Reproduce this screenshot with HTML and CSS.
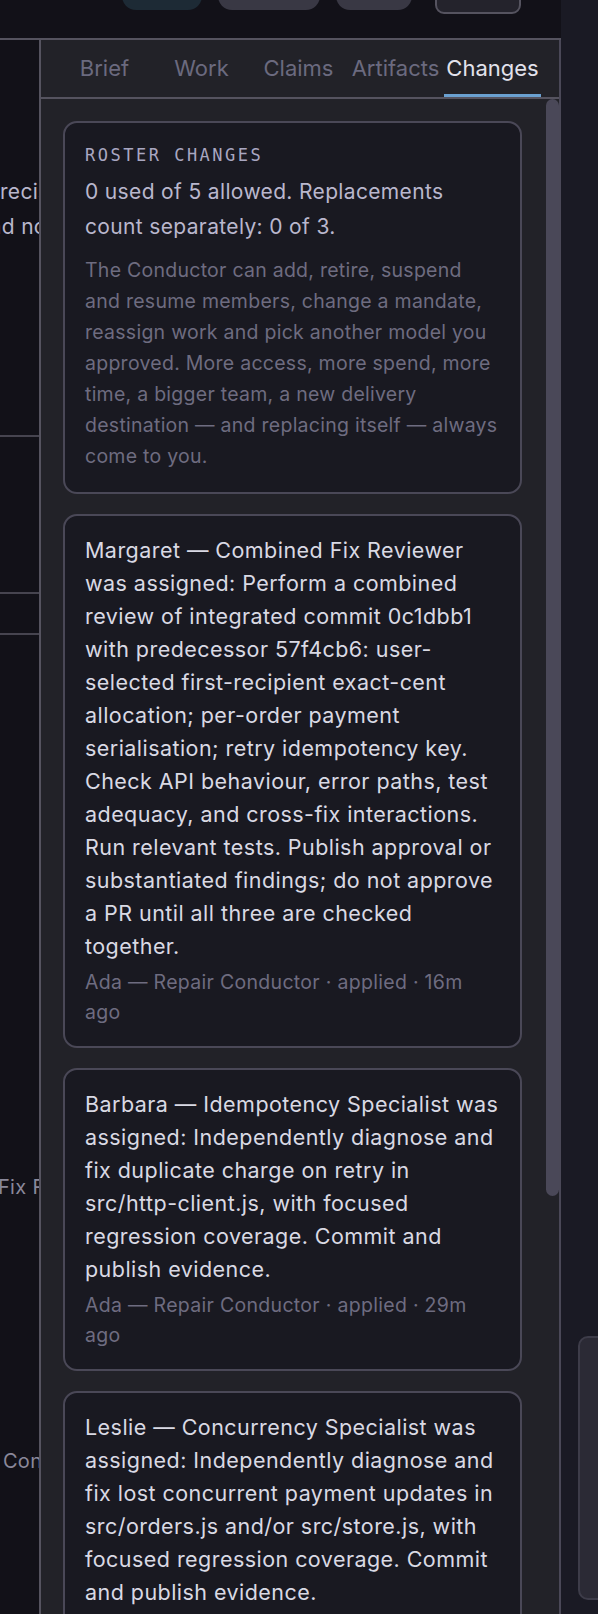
FILE: index.html
```html
<!DOCTYPE html>
<html lang="en">
<head>
<meta charset="utf-8">
<title>Changes</title>
<link rel="stylesheet" href="styles.css">
</head>
<body>
<div class="app">
  <div class="main">
    <header class="topbar">
      <span class="pill pill-teal"></span>
      <span class="pill pill-gray pill-b"></span>
      <span class="pill pill-gray pill-c"></span>
      <span class="pill pill-outline"></span>
    </header>
    <div class="body">
      <aside class="leftcol">
        <div class="lc-text lc-bright lc-first">recision of</div>
        <div class="lc-text lc-bright lc-indent">and no</div>
        <div class="lc-rule lc-rule-a"></div>
        <div class="lc-rule lc-rule-b"></div>
        <div class="lc-rule lc-rule-c"></div>
        <div class="lc-text lc-dim lc-fix">Fix Reviewer</div>
        <div class="lc-text lc-dim lc-com">&nbsp;Concurrency</div>
      </aside>
      <section class="panel">
        <nav class="tabs">
          <span class="tab">Brief</span>
          <span class="tab">Work</span>
          <span class="tab">Claims</span>
          <span class="tab">Artifacts</span>
          <span class="tab tab-active">Changes</span>
        </nav>
        <div class="scroll">
          <div class="content">
            <article class="card">
              <div class="label">ROSTER CHANGES</div>
              <p class="summary">0 used of 5 allowed. Replacements count separately: 0 of 3.</p>
              <p class="desc">The Conductor can add, retire, suspend and resume members, change a mandate, reassign work and pick another model you approved. More access, more spend, more time, a bigger team, a new delivery destination — and replacing itself — always come to you.</p>
            </article>
            <article class="card">
              <p class="entry">Margaret — Combined Fix Reviewer was assigned: Perform a combined review of integrated commit 0c1dbb1 with predecessor 57f4cb6: user-selected first-recipient exact-cent allocation; per-order payment serialisation; retry idempotency key. Check API behaviour, error paths, test adequacy, and cross-fix interactions. Run relevant tests. Publish approval or substantiated findings; do not approve a PR until all three are checked together.</p>
              <p class="meta">Ada — Repair Conductor · applied · 16m ago</p>
            </article>
            <article class="card">
              <p class="entry">Barbara — Idempotency Specialist was assigned: Independently diagnose and fix duplicate charge on retry in src/http-client.js, with focused regression coverage. Commit and publish evidence.</p>
              <p class="meta">Ada — Repair Conductor · applied · 29m ago</p>
            </article>
            <article class="card">
              <p class="entry">Leslie — Concurrency Specialist was assigned: Independently diagnose and fix lost concurrent payment updates in src/orders.js and/or src/store.js, with focused regression coverage. Commit and publish evidence.</p>
              <p class="meta">Ada — Repair Conductor · applied · 31m ago</p>
            </article>
          </div>
          <div class="track"><div class="thumb"></div></div>
        </div>
      </section>
    </div>
  </div>
  <aside class="strip">
    <div class="strip-box"></div>
  </aside>
</div>
</body>
</html>
```

FILE: styles.css
```css
html, body {
  margin: 0;
  padding: 0;
  height: 1614px;
  overflow: hidden;
  background: #1a1a24;
  font-family: Inter, "Noto Sans", "DejaVu Sans", sans-serif;
}

.app {
  display: flex;
  width: 598px;
  height: 1614px;
  overflow: hidden;
}

.main {
  width: 561px;
  flex: none;
  display: flex;
  flex-direction: column;
  height: 1614px;
}

/* top bar */
.topbar {
  height: 38px;
  flex: none;
  background: #121118;
  border-bottom: 2px solid #55535f;
  display: flex;
  align-items: flex-start;
  padding-left: 122px;
  overflow: hidden;
}

.pill {
  display: block;
  height: 40px;
  margin-top: -30px;
  border-radius: 14px;
  flex: none;
}

.pill-teal { width: 80px; background: #1d2a35; }
.pill-gray { background: #393844; }
.pill-b { width: 102px; margin-left: 16px; }
.pill-c { width: 76px; margin-left: 16px; }
.pill-outline {
  width: 86px;
  margin-left: 23px;
  margin-top: -28px;
  height: 42px;
  box-sizing: border-box;
  border-radius: 9px;
  background: #24232c;
  border: 2px solid #55535f;
}

/* body row */
.body {
  flex: 1;
  display: flex;
  min-height: 0;
}

.leftcol {
  width: 39px;
  flex: none;
  background: #121118;
  overflow: hidden;
  display: flex;
  flex-direction: column;
}

.lc-text {
  white-space: nowrap;
  font-size: 21px;
  line-height: 35px;
  letter-spacing: 0.3px;
}

.lc-bright { color: #b9b7cc; }
.lc-dim { color: #8a889a; font-size: 20px; line-height: 30px; }

.lc-first { margin-top: 134px; }
.lc-indent { text-indent: -23px; }

.lc-rule {
  height: 2px;
  background: #46444f;
  flex: none;
}

.lc-rule-a { margin-top: 191px; }
.lc-rule-b { margin-top: 155px; }
.lc-rule-c { margin-top: 39px; }

.lc-fix { margin-top: 537px; text-indent: -2px; }
.lc-com { margin-top: 244px; text-indent: -3px; }

/* panel */
.panel {
  flex: 1;
  min-width: 0;
  display: flex;
  flex-direction: column;
  background: #222228;
  border-left: 2px solid #55535f;
  border-right: 2px solid #4a4857;
}

.tabs {
  height: 57px;
  flex: none;
  display: flex;
  padding: 0 18px 0 15px;
  border-bottom: 2px solid #55535f;
}

.tab {
  flex: 1;
  display: flex;
  align-items: center;
  justify-content: center;
  white-space: nowrap;
  font-size: 22px;
  color: #6b6a7f;
  box-sizing: border-box;
  border-bottom: 3px solid transparent;
  padding-top: 1px;
}

.tab-active {
  color: #e2e2ec;
  border-bottom-color: #6aa0d0;
}

.scroll {
  flex: 1;
  display: flex;
  min-height: 0;
}

.content {
  flex: 1;
  min-width: 0;
  padding: 22px 24px 0 22px;
  display: flex;
  flex-direction: column;
  gap: 20px;
}

.track {
  width: 13px;
  flex: none;
}

.thumb {
  height: 1097px;
  background: #4a4858;
  border-radius: 7px;
}

/* cards */
.card {
  background: #191921;
  border: 2px solid #4a4857;
  border-radius: 14px;
  padding: 18px 20px 19px;
  flex: none;
}

.card p { margin: 0; }

.label {
  margin-top: 3px;
  font-family: "DejaVu Sans Mono", "Liberation Mono", monospace;
  font-size: 17px;
  letter-spacing: 2.5px;
  line-height: 22px;
  color: #a9a7c1;
}

.card .summary {
  margin-top: 8px;
  font-size: 21px;
  line-height: 35px;
  letter-spacing: 0.35px;
  color: #b9b7cd;
}

.card .desc {
  margin-top: 11px;
  margin-bottom: 1px;
  font-size: 19.5px;
  line-height: 31px;
  letter-spacing: 0.26px;
  color: #6e6c80;
}

.entry {
  font-size: 21.5px;
  line-height: 33px;
  letter-spacing: 0.45px;
  color: #d9d9e4;
}

.card .meta {
  margin-top: 4px;
  font-size: 19.5px;
  line-height: 30px;
  letter-spacing: 0.3px;
  color: #6e6c80;
}

/* right strip */
.strip {
  flex: 1;
  background: #1a1a24;
  overflow: hidden;
}

.strip-box {
  margin-top: 1336px;
  margin-left: 17px;
  width: 40px;
  height: 264px;
  box-sizing: border-box;
  background: #2b2a35;
  border: 2px solid #3d3c49;
  border-radius: 10px;
}
```
